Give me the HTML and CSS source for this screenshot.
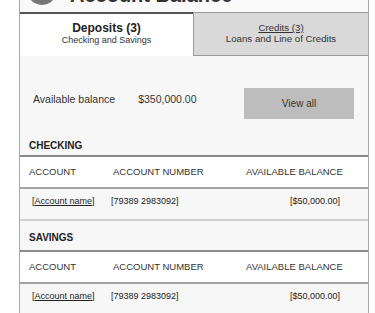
FILE: index.html
```html
<!DOCTYPE html>
<html>
<head>
  <title>Account Balance</title>
  <link rel="stylesheet" href="styles.css">
</head>
<body>

<div class="card">
  <div class="card-head">
    <span class="avatar"></span>
    <h2 class="card-title">Account Balance</h2>
  </div>

  <div class="tabs">
    <div class="tab tab-active">
      <span class="tab-title">Deposits (3)</span>
      <span class="tab-sub">Checking and Savings</span>
    </div>
    <div class="tab tab-other">
      <a class="tab-title" href="#">Credits (3)</a>
      <span class="tab-sub">Loans and Line of Credits</span>
    </div>
  </div>

  <div class="panel">
    <div class="balance">
      <span class="balance-label">Available balance</span>
      <span class="balance-value">$350,000.00</span>
      <button class="view-all">View all</button>
    </div>

    <h4 class="section-title first">CHECKING</h4>
    <div class="acc-row acc-head">
      <span>ACCOUNT</span>
      <span>ACCOUNT NUMBER</span>
      <span>AVAILABLE BALANCE</span>
    </div>
    <div class="acc-row acc-data">
      <span class="acc-name">[<a href="#">Account name</a>]</span>
      <span class="acc-num">[79389 2983092]</span>
      <span class="acc-bal">[$50,000.00]</span>
    </div>

    <h4 class="section-title">SAVINGS</h4>
    <div class="acc-row acc-head">
      <span>ACCOUNT</span>
      <span>ACCOUNT NUMBER</span>
      <span>AVAILABLE BALANCE</span>
    </div>
    <div class="acc-row acc-data">
      <span class="acc-name">[<a href="#">Account name</a>]</span>
      <span class="acc-num">[79389 2983092]</span>
      <span class="acc-bal">[$50,000.00]</span>
    </div>
  </div>
</div>

</body>
</html>
```

FILE: styles.css
```css
* {
  box-sizing: border-box;
}

body {
  margin: 0;
  background-color: #fff;
  color: #333;
  font-family: "Liberation Sans", Arial, sans-serif;
  overflow: hidden;
}

.card {
  width: 350px;
  margin-left: 19px;
  border-left: 1px solid #a6a6a6;
  border-right: 1px solid #a6a6a6;
  background: #f7f7f7;
  min-height: 400px;
}

.card-head {
  height: 50px;
  margin-top: -38px;
  display: flex;
  align-items: flex-start;
  gap: 13px;
  padding: 13px 0 0 7px;
  background: #fafafa;
}

.avatar {
  width: 30px;
  height: 30px;
  border-radius: 50%;
  background: #777;
  flex: none;
}

.card-title {
  margin: 8px 0 0;
  font-size: 20px;
  line-height: 24px;
  color: #333;
}

.tabs {
  display: flex;
  height: 44px;
}

.tab {
  display: flex;
  flex-direction: column;
  align-items: center;
}

.tab-active {
  flex: 0 0 173px;
  background: #fff;
  border-top: 2px solid #555;
  padding-top: 7px;
}

.tab-active .tab-title {
  font-size: 12px;
  font-weight: bold;
  line-height: 14px;
  color: #222;
}

.tab-active .tab-sub {
  font-size: 9px;
  line-height: 11px;
  color: #333;
}

.tab-other {
  flex: 1;
  background: #d9d9d9;
  border: 1px solid #999;
  border-right: none;
  padding-top: 9px;
}

.tab-other .tab-title {
  font-size: 9.7px;
  line-height: 12px;
  color: #333;
  text-decoration: underline;
}

.tab-other .tab-sub {
  font-size: 9.7px;
  line-height: 10px;
  color: #333;
}

.balance {
  display: flex;
  align-items: flex-start;
  height: 31px;
  margin-top: 32px;
  padding: 0 14px 0 13px;
  font-size: 10.5px;
}

.balance-label,
.balance-value {
  line-height: 23px;
}

.balance-value {
  margin-left: 23px;
}

.view-all {
  margin-left: auto;
  width: 110px;
  height: 31px;
  border: none;
  background: #bdbdbd;
  color: #333;
  font-family: inherit;
  font-size: 10px;
  padding: 0;
}

.section-title {
  margin: 0;
  padding: 10px 9px 5px;
  font-size: 10px;
  line-height: 14px;
  color: #222;
  border-top: 2px solid #cfcfcf;
  border-bottom: 2px solid #8a8a8a;
}

.section-title.first {
  padding-top: 20px;
  padding-bottom: 2px;
  border-top: none;
}

.acc-row {
  display: grid;
  grid-template-columns: 84px 133px 1fr;
  padding: 0 9px;
}

.acc-head {
  height: 32px;
  line-height: 30px;
  background: #fff;
  font-size: 9.5px;
  color: #333;
  border-bottom: 2px solid #a3a3a3;
}

.acc-data {
  height: 30px;
  padding-top: 5px;
  line-height: 14px;
  font-size: 9px;
  color: #222;
}

.acc-name {
  padding-left: 3px;
}

.acc-name a {
  color: #222;
  text-decoration: underline;
}

.acc-num {
  margin-left: -2px;
}

.acc-bal {
  text-align: right;
  padding-right: 19px;
}
```
